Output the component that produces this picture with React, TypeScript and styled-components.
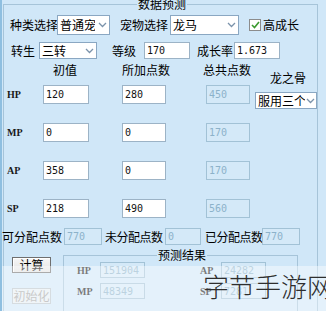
import React from "react";
import styled, { createGlobalStyle } from "styled-components";

const GlobalStyle = createGlobalStyle`
  html, body {
    margin: 0;
    padding: 0;
    background: #d0e7f8;
  }
`;

const Frame = styled.div`
  position: relative;
  width: 326px;
  height: 311px;
  overflow: hidden;
  box-sizing: border-box;
  padding-top: 4px;
  background: #d0e7f8;
  border-left: 2px solid #8fbfe0;
  font-family: "Noto Sans CJK SC", sans-serif;
  font-size: 12px;
  color: #000;
`;

const GroupBox = styled.div`
  position: relative;
  box-sizing: border-box;
  margin-left: 1px;
  width: 315px;
  height: 340px;
  border: 1px solid #a6c4d9;
`;

const Legend = styled.span<{ $left: number }>`
  position: absolute;
  top: -7px;
  left: ${(p) => p.$left}px;
  padding: 0 1px;
  background: #d0e7f8;
  line-height: 12px;
  font-size: 12px;
  white-space: nowrap;
`;

const Row = styled.div<{ $top: number; $h: number; $ml?: number }>`
  display: flex;
  align-items: center;
  margin-top: ${(p) => p.$top}px;
  margin-left: ${(p) => p.$ml ?? 0}px;
  height: ${(p) => p.$h}px;
`;

const Label = styled.span<{ $w: number; $ml?: number; $tight?: boolean }>`
  flex: none;
  width: ${(p) => p.$w}px;
  margin-left: ${(p) => p.$ml ?? 0}px;
  white-space: nowrap;
  line-height: 12px;
  letter-spacing: ${(p) => (p.$tight ? "-0.5px" : "0")};
`;

const Combo = styled.div<{ $w: number; $h: number }>`
  flex: none;
  position: relative;
  box-sizing: border-box;
  display: flex;
  align-items: center;
  width: ${(p) => p.$w}px;
  height: ${(p) => p.$h}px;
  padding-left: 2px;
  background: #fff;
  border: 1px solid #8aa7c2;
`;

const ComboText = styled.span`
  flex: 1;
  overflow: hidden;
  white-space: nowrap;
  line-height: 12px;
`;

const Chevron = styled.span<{ $w: number }>`
  flex: none;
  width: ${(p) => p.$w}px;
  display: flex;
  justify-content: center;
`;

const TextBox = styled.div<{ $w: number; $off?: boolean }>`
  flex: none;
  box-sizing: border-box;
  display: flex;
  align-items: center;
  width: ${(p) => p.$w}px;
  height: 100%;
  padding-left: 2px;
  background: ${(p) => (p.$off ? "#d4e9f8" : "#fff")};
  border: 1px solid ${(p) => (p.$off ? "#a2c2d6" : "#9cb3c6")};
  color: ${(p) => (p.$off ? "#8cb2ca" : "#111")};
  font-family: "DejaVu Sans Mono", monospace;
  font-size: 10px;
  overflow: hidden;
  white-space: nowrap;
`;

const Check = styled.span<{ $ml: number }>`
  flex: none;
  box-sizing: border-box;
  width: 12px;
  height: 12px;
  margin-left: ${(p) => p.$ml}px;
  background: #fff;
  border: 1px solid #8c8c8c;
  display: flex;
  align-items: center;
  justify-content: center;
`;

const HeadRow = styled.div`
  display: flex;
  height: 20px;
  margin-top: 5px;
`;

const Head = styled.span<{ $ml: number; $w: number; $low?: boolean }>`
  flex: none;
  width: ${(p) => p.$w}px;
  margin-left: ${(p) => p.$ml}px;
  align-self: ${(p) => (p.$low ? "flex-end" : "flex-start")};
  line-height: 12px;
  white-space: nowrap;
`;

const DataGrid = styled.div`
  display: grid;
  grid-template-columns: 36px 46px 33px 44px 40px 44px 5px 62px;
  grid-template-rows: repeat(4, 19px);
  row-gap: 19px;
  margin-top: 1px;
  padding-left: 3px;
`;

const Cell = styled.div<{ $col: number }>`
  grid-column: ${(p) => p.$col};
  display: flex;
  align-items: center;
  height: 19px;
`;

const StatName = styled.span`
  font-family: "Liberation Serif", serif;
  font-size: 10px;
  font-weight: bold;
  color: #1a1a1a;
`;

const DropCell = styled.div`
  grid-column: 8;
  align-self: start;
  margin-top: 7px;
`;

const Bottom = styled.div`
  display: flex;
  margin-top: 10px;
`;

const ButtonCol = styled.div`
  flex: none;
  display: flex;
  flex-direction: column;
  gap: 15px;
  width: 39px;
  margin-left: 8px;
  padding-top: 2px;
`;

const Btn = styled.button<{ $off?: boolean }>`
  box-sizing: border-box;
  width: 39px;
  height: 16px;
  padding: 0;
  font-family: "Noto Sans CJK SC", sans-serif;
  font-size: 12px;
  line-height: 12px;
  color: ${(p) => (p.$off ? "#a3a3a3" : "#000")};
  background: ${(p) => (p.$off ? "#e6eef3" : "linear-gradient(#f7f7f7, #e2e2e2)")};
  border: 1px solid ${(p) => (p.$off ? "#b9c3ca" : "#6f6f6f")};
  box-shadow: ${(p) => (p.$off ? "none" : "inset 1px 1px 0 #fff")};
`;

const ResultBox = styled.div`
  position: relative;
  flex: none;
  box-sizing: border-box;
  width: 235px;
  height: 80px;
  margin-left: 12px;
  padding-top: 6px;
  border: 1px solid #a6c4d9;
  display: flex;
  flex-direction: column;
  gap: 5px;
`;

const ResultRow = styled.div`
  display: flex;
  align-items: center;
  height: 16px;
`;

const Watermark = styled.div`
  position: absolute;
  left: 0;
  right: 0;
  top: 266px;
  bottom: 0;
  background: rgba(255, 255, 255, 0.42);
`;

const WatermarkText = styled.span`
  position: absolute;
  left: 201px;
  top: 5px;
  font-family: "Noto Sans CJK SC", sans-serif;
  font-size: 26px;
  font-weight: 300;
  line-height: 30px;
  color: #2e2e2e;
  white-space: nowrap;
`;

const Down = () => (
  <svg width="9" height="6" viewBox="0 0 9 6">
    <polyline points="1,1 4.5,4.5 8,1" fill="none" stroke="#7b93ab" strokeWidth="1.3" />
  </svg>
);

const Select: React.FC<{ w: number; h: number; text: string; cw?: number }> = ({
  w,
  h,
  text,
  cw = 14,
}) => (
  <Combo $w={w} $h={h}>
    <ComboText>{text}</ComboText>
    <Chevron $w={cw}>
      <Down />
    </Chevron>
  </Combo>
);

const stats = [
  { name: "HP", base: "120", add: "280", total: "450" },
  { name: "MP", base: "0", add: "0", total: "170" },
  { name: "AP", base: "358", add: "0", total: "170" },
  { name: "SP", base: "218", add: "490", total: "560" },
];

const App: React.FC = () => {
  return (
    <Frame>
      <GlobalStyle />
      <GroupBox>
        <Legend $left={133}>数据预测</Legend>

        <Row $top={10} $h={20}>
          <Label $w={47} $ml={6}>种类选择</Label>
          <Select w={53} h={20} text="普通宠物" />
          <Label $w={50} $ml={10}>宠物选择</Label>
          <Select w={69} h={20} text="龙马" />
          <Check $ml={10}>
            <svg width="9" height="8" viewBox="0 0 9 8">
              <polyline points="1,4 3.5,6.5 8,1" fill="none" stroke="#3b9a2f" strokeWidth="1.6" />
            </svg>
          </Check>
          <Label $w={40} $ml={2}>高成长</Label>
        </Row>

        <Row $top={7} $h={17}>
          <Label $w={28} $ml={7}>转生</Label>
          <Select w={58} h={17} text="三转" />
          <Label $w={32} $ml={15}>等级</Label>
          <TextBox $w={46}>170</TextBox>
          <Label $w={37} $ml={7}>成长率</Label>
          <TextBox $w={46}>1.673</TextBox>
        </Row>

        <HeadRow>
          <Head $ml={49} $w={24}>初值</Head>
          <Head $ml={45} $w={48}>所加点数</Head>
          <Head $ml={33} $w={48}>总共点数</Head>
          <Head $ml={19} $w={40} $low>龙之骨</Head>
        </HeadRow>

        <DataGrid>
          {stats.map((s, i) => (
            <React.Fragment key={s.name}>
              <Cell $col={1}>
                <StatName>{s.name}</StatName>
              </Cell>
              <Cell $col={2}>
                <TextBox $w={46}>{s.base}</TextBox>
              </Cell>
              <Cell $col={4}>
                <TextBox $w={44}>{s.add}</TextBox>
              </Cell>
              <Cell $col={6}>
                <TextBox $w={44} $off>{s.total}</TextBox>
              </Cell>
              {i === 0 && (
                <DropCell>
                  <Select w={62} h={17} text="服用三个" cw={11} />
                </DropCell>
              )}
            </React.Fragment>
          ))}
        </DataGrid>

        <Row $top={10} $h={17} $ml={-2}>
          <Label $w={62}>可分配点数</Label>
          <TextBox $w={38} $off>770</TextBox>
          <Label $w={60} $ml={3} $tight>未分配点数</Label>
          <TextBox $w={36} $off>0</TextBox>
          <Label $w={57} $ml={4} $tight>已分配点数</Label>
          <TextBox $w={38} $off>770</TextBox>
        </Row>

        <Bottom>
          <ButtonCol>
            <Btn>计算</Btn>
            <Btn $off>初始化</Btn>
          </ButtonCol>
          <ResultBox>
            <Legend $left={93}>预测结果</Legend>
            <ResultRow>
              <Label $w={23} $ml={13}>
                <StatName>HP</StatName>
              </Label>
              <TextBox $w={45} $off>151904</TextBox>
              <Label $w={21} $ml={55}>
                <StatName>AP</StatName>
              </Label>
              <TextBox $w={45} $off>24282</TextBox>
            </ResultRow>
            <ResultRow>
              <Label $w={23} $ml={13}>
                <StatName>MP</StatName>
              </Label>
              <TextBox $w={45} $off>48349</TextBox>
              <Label $w={21} $ml={55}>
                <StatName>SP</StatName>
              </Label>
              <TextBox $w={45} $off>7281</TextBox>
            </ResultRow>
          </ResultBox>
        </Bottom>
      </GroupBox>

      <Watermark>
        <WatermarkText>字节手游网</WatermarkText>
      </Watermark>
    </Frame>
  );
};

export default App;
